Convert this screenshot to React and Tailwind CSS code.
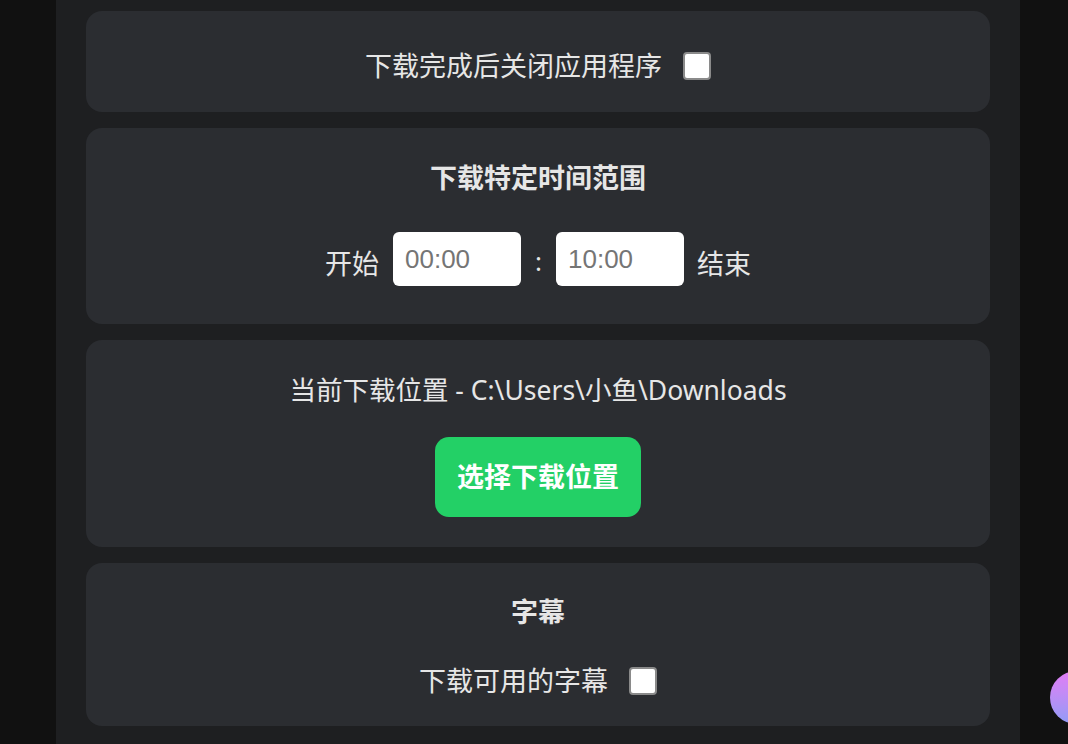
export default function App() {
  const cjk = "font-['Noto_Sans','Noto_Sans_CJK_SC',sans-serif]"
  return (
    <div className={`min-h-[744px] bg-[#111111] ${cjk}`}>
      <div className="ml-[56px] w-[964px] min-h-[744px] bg-[#1e1f21] px-[30px] pt-[11px] pb-4 flex flex-col gap-4 text-[#e6e6e6]">
        <section className="rounded-2xl bg-[#2b2d31] pt-[37px] pb-[28px] flex items-center justify-center gap-[21px]">
          <span className="text-[27px] leading-[36px]">下载完成后关闭应用程序</span>
          <input type="checkbox" className="h-[28px] w-[28px] appearance-none rounded-[4px] border-2 border-[#8a8a8a] bg-white" />
        </section>

        <section className="rounded-2xl bg-[#2b2d31] pt-[32px] pb-[38px] flex flex-col items-center gap-[36px]">
          <h2 className="text-[27px] leading-[36px] font-bold">下载特定时间范围</h2>
          <div className="flex items-center">
            <span className="mt-[10px] text-[27px] leading-[36px] mr-[14px]">开始</span>
            <input
              type="text"
              placeholder="00:00"
              className="h-[54px] w-[128px] rounded-md bg-white px-3 text-[26px] font-['Liberation_Sans',sans-serif] text-[#333] outline-none placeholder:text-[#757575]"
            />
            <span className="mt-[4px] mx-[14px] text-[26px] leading-[36px]">:</span>
            <input
              type="text"
              placeholder="10:00"
              className="h-[54px] w-[128px] rounded-md bg-white px-3 text-[26px] font-['Liberation_Sans',sans-serif] text-[#333] outline-none placeholder:text-[#757575]"
            />
            <span className="mt-[10px] text-[27px] leading-[36px] ml-[13px]">结束</span>
          </div>
        </section>

        <section className="rounded-2xl bg-[#2b2d31] pt-[32px] pb-[30px] flex flex-col items-center gap-[29px]">
          <p className="text-[26.5px] leading-[36px]">当前下载位置 - C:\Users\小鱼\Downloads</p>
          <button className="h-[80px] w-[206px] rounded-[14px] bg-[#23d066] text-[27px] font-bold text-white">
            选择下载位置
          </button>
        </section>

        <section className="rounded-2xl bg-[#2b2d31] pt-[31px] pb-[27px] flex flex-col items-center gap-[33px]">
          <h2 className="text-[27px] leading-[36px] font-bold">字幕</h2>
          <div className="flex items-center gap-[21px]">
            <span className="text-[27px] leading-[36px]">下载可用的字幕</span>
            <input type="checkbox" className="h-[28px] w-[28px] appearance-none rounded-[4px] border-2 border-[#8a8a8a] bg-white" />
          </div>
        </section>
      </div>
      <div className="fixed left-[1050px] top-[671px] h-[53px] w-[53px] rounded-full bg-gradient-to-b from-[#e17cf5] to-[#8f9bf6]" />
    </div>
  )
}
